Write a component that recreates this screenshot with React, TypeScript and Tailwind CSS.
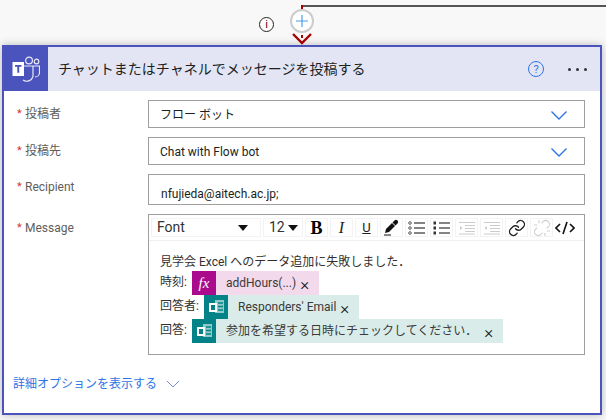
import React from 'react';
import { Link, Unlink } from 'lucide-react';

const FormsIcon = () => (
  <svg width="18" height="18" viewBox="0 0 18 18">
    <rect x="8" y="2" width="9" height="13" fill="#8fc9c9" />
    <path d="M11 5h5M11 8.500h5M11 12h5" stroke="#038387" strokeWidth="1.600" />
    <rect x="2" y="5" width="8" height="9" rx="0.500" fill="#fff" />
    <rect x="4" y="7" width="4" height="5" fill="#038387" />
  </svg>
);

const TeamsIcon = () => (
  <svg width="28" height="28" viewBox="0 0 28 28" fill="none">
    <circle cx="17" cy="5.500" r="3.400" stroke="#e8e9f7" strokeWidth="1.200" />
    <circle cx="24.500" cy="6.500" r="2.300" stroke="#e8e9f7" strokeWidth="1.200" />
    <path d="M12 11h15.500v6.500a4.500 4.500 0 0 1-4.500 4.500" stroke="#e8e9f7" strokeWidth="1.200" />
    <path d="M21 11v10.500a6.500 6.500 0 0 1-10 3.500" stroke="#e8e9f7" strokeWidth="1.200" />
    <rect x="0.500" y="7" width="11.500" height="14" fill="#fff" />
    <path d="M3 10h6.500v1.800H7.200v6H5.300v-6H3z" fill="#4b53bc" />
  </svg>
);

const WideChevron = () => (
  <svg width="16" height="9" viewBox="0 0 16 9" fill="none">
    <path d="M0.500 0.500l7.500 7.500 7.500-7.500" stroke="#2f74e4" strokeWidth="1.400" />
  </svg>
);

const ListIcon = ({ numbered }: { numbered?: boolean }) => (
  <svg width="18" height="14" viewBox="0 0 18 14" fill="none">
    {[2, 7, 12].map((y) => (
      <g key={y}>
        {numbered ? (
          <rect x="0.500" y={y - 1.500} width="2.500" height="3" fill="#333" />
        ) : (
          <circle cx="2" cy={y} r="1.300" stroke="#333" strokeWidth="0.800" />
        )}
        <path d={`M6 ${y}h11`} stroke="#333" strokeWidth="1.200" />
      </g>
    ))}
  </svg>
);

const IndentIcon = ({ flip }: { flip?: boolean }) => (
  <svg width="18" height="14" viewBox="0 0 18 14" fill="none" stroke="#ccc">
    <path d="M1 1.500h16M7 4.500h10M7 7.500h10M7 10.500h10M1 13h16" />
    <path d={flip ? 'M4 5v4L1.500 7z' : 'M2 5v4l2.500-2z'} fill="#ccc" stroke="none" />
  </svg>
);

const ToolButton = ({ children }: { children: React.ReactNode }) => (
  <div className="flex h-[19px] w-[23px] items-center justify-center border border-[#f3f3f3]">{children}</div>
);

const Token = ({
  icon,
  label,
  tone,
  closeGap = 'ml-[4px] mr-[10px]',
}: {
  icon: React.ReactNode;
  label: string;
  tone: 'fx' | 'forms';
  closeGap?: string;
}) => (
  <div className={`flex h-[24px] items-center ${tone === 'fx' ? 'bg-[#f3d9ec]' : 'bg-[#d9ecea]'}`}>
    <div className={`flex h-[24px] w-[24px] items-center justify-center ${tone === 'fx' ? 'bg-[#aa0a8c]' : 'bg-[#038387]'}`}>
      {icon}
    </div>
    <span className="ml-[10px] text-[#3b3a39]">{label}</span>
    <span className={`${closeGap} mt-[2px] text-[17px] font-light leading-none text-[#111]`}>×</span>
  </div>
);

const Field = ({
  label,
  offset,
  children,
}: {
  label: string;
  offset: string;
  children: React.ReactNode;
}) => (
  <div className="flex items-start">
    <div className={`flex w-[144px] pl-[13px] leading-[18px] text-[#605e5c] ${offset}`}>
      <span className="w-[8px] text-[11px] text-[#d13438]">*</span>
      {label}
    </div>
    {children}
  </div>
);

const Select = ({ value }: { value: string }) => (
  <div className="flex h-[28px] w-[437px] items-center justify-between border border-[#a19f9d] bg-white pl-[11px] pr-[17px] pt-[2px] text-[#201f1e]">
    <span>{value}</span>
    <WideChevron />
  </div>
);

const App: React.FC = () => {
  return (
    <div className="relative h-[420px] w-[606px] overflow-hidden bg-[#f8f8f8] font-['Roboto','Noto_Sans_CJK_JP',sans-serif] text-[12px]">
      <div className="relative h-[45px]">
        <div className="absolute left-[302px] top-[5px] h-[2px] w-[304px] bg-[#555]" />
        <div className="absolute left-[301px] top-[5px] h-[5px] w-[2px] bg-[#a80000]" />
        <div className="absolute left-[259px] top-[17px] flex h-[15px] w-[15px] items-center justify-center rounded-full border-[1.5px] border-[#222] bg-white text-[11px] leading-none text-[#600]">
          i
        </div>
        <div className="absolute left-[290px] top-[9px] flex h-[24px] w-[24px] items-center justify-center rounded-full border-2 border-[#ccc] bg-white">
          <svg width="12" height="12" viewBox="0 0 12 12">
            <path d="M6 0v12M0 6h12" stroke="#4a9eea" strokeWidth="1.200" />
          </svg>
        </div>
        <svg className="absolute left-[292px] top-[33px]" width="20" height="12" viewBox="0 0 20 12" fill="none">
          <path d="M1 1l9 9 9-9" stroke="#a80000" strokeWidth="2.400" />
          <path d="M10 2v3" stroke="#a80000" strokeWidth="2" />
        </svg>
      </div>

      <div className="ml-[2px] h-[370px] w-[600px] border-2 border-[#4b53bc] bg-white shadow-[0_0_8px_rgba(0,0,0,0.25)]">
        <div className="flex h-[44px] items-center bg-[#e3e5f4]">
          <div className="flex h-[44px] w-[44px] items-center justify-center bg-[#4b53bc]">
            <TeamsIcon />
          </div>
          <span className="ml-[10px] flex-1 text-[14px] text-[#201f1e]">チャットまたはチャネルでメッセージを投稿する</span>
          <div className="mr-[24px] flex h-[16px] w-[16px] items-center justify-center rounded-full border-[1.5px] border-[#2f74e4] text-[11px] leading-none text-[#2f74e4]">
            ?
          </div>
          <div className="mr-[13px] flex gap-[5px]">
            <div className="h-[3px] w-[3px] rounded-full bg-[#333]" />
            <div className="h-[3px] w-[3px] rounded-full bg-[#333]" />
            <div className="h-[3px] w-[3px] rounded-full bg-[#333]" />
          </div>
        </div>

        <div className="flex flex-col gap-[9px] pt-[9px]">
          <Field label="投稿者" offset="pt-[5px]">
            <Select value="フロー ボット" />
          </Field>
          <Field label="投稿先" offset="pt-[5px]">
            <Select value="Chat with Flow bot" />
          </Field>
          <Field label="Recipient" offset="pt-[4px]">
            <div className="flex h-[31px] w-[437px] items-end border border-[#a19f9d] bg-white pb-[1px] pl-[12px] text-[#201f1e]">
              nfujieda@aitech.ac.jp;
            </div>
          </Field>
          <Field label="Message" offset="pt-[5px]">
            <div className="h-[141px] w-[437px] border border-[#a19f9d] bg-white">
              <div className="flex h-[26px] items-center gap-[2px] border-b border-[#f0f0f0] pl-[2px]">
                <div className="flex h-[19px] w-[110px] items-center justify-between border border-[#f3f3f3] pl-[5px] pr-[12px] text-[14px] text-[#333]">
                  Font
                  <span className="h-0 w-0 border-x-[5px] border-t-[6px] border-x-transparent border-t-[#111]" />
                </div>
                <div className="flex h-[19px] w-[40px] items-center justify-between border border-[#f3f3f3] pl-[5px] pr-[4px] text-[14px] text-[#333]">
                  12
                  <span className="h-0 w-0 border-x-[5px] border-t-[6px] border-x-transparent border-t-[#111]" />
                </div>
                <ToolButton>
                  <span className="font-['Liberation_Serif',serif] text-[18px] font-bold leading-none text-black">B</span>
                </ToolButton>
                <ToolButton>
                  <span className="font-['Liberation_Serif',serif] text-[16px] italic leading-none text-[#222]">I</span>
                </ToolButton>
                <ToolButton>
                  <span className="text-[13px] leading-none text-[#222] underline">U</span>
                </ToolButton>
                <ToolButton>
                  <svg width="17" height="17" viewBox="0 0 17 17">
                    <path d="M2 14l1-4 6-6 3 3-6 6z" fill="#111" />
                    <path d="M9.500 3.500l2-2a1.500 1.500 0 0 1 3 3l-2 2z" fill="#111" />
                    <path d="M1 16h7" stroke="#111" />
                  </svg>
                </ToolButton>
                <ToolButton>
                  <ListIcon />
                </ToolButton>
                <ToolButton>
                  <ListIcon numbered />
                </ToolButton>
                <ToolButton>
                  <IndentIcon />
                </ToolButton>
                <ToolButton>
                  <IndentIcon flip />
                </ToolButton>
                <ToolButton>
                  <Link size={18} strokeWidth={1.800} className="text-[#222]" />
                </ToolButton>
                <ToolButton>
                  <Unlink size={18} strokeWidth={1.400} className="text-[#ccc]" />
                </ToolButton>
                <svg width="20" height="14" viewBox="0 0 20 14" fill="none" stroke="#111" strokeWidth="1.600">
                  <path d="M5 3L1 7l4 4M15 3l4 4-4 4M12 1L8 13" />
                </svg>
              </div>
              <div className="pl-[11px] pt-[12px] text-[#323130]">
                <div className="h-[18px] leading-[18px]">見学会 Excel へのデータ追加に失敗しました．</div>
                <div className="flex h-[24px] items-center">
                  <span className="mb-[2px] w-[32px]">時刻:</span>
                  <Token tone="fx" label="addHours(...)" icon={<span className="font-['Liberation_Serif',serif] text-[15px] italic text-white">fx</span>} />
                </div>
                <div className="flex h-[24px] items-center">
                  <span className="mb-[2px] w-[44px]">回答者:</span>
                  <Token tone="forms" label="Responders' Email" icon={<FormsIcon />} />
                </div>
                <div className="flex h-[24px] items-center">
                  <span className="mb-[2px] w-[32px]">回答:</span>
                  <Token
                    tone="forms"
                    label="参加を希望する日時にチェックしてください．"
                    icon={<FormsIcon />}
                    closeGap="ml-[7px] mr-[10px]"
                  />
                </div>
              </div>
            </div>
          </Field>
        </div>

        <div className="flex items-center pl-[9px] pt-[20px] text-[#2f74e4]">
          詳細オプションを表示する
          <svg width="14" height="8" viewBox="0 0 14 8" fill="none" className="ml-[9px]">
            <path d="M1 1l6 6 6-6" stroke="#7a8fe0" strokeWidth="1" />
          </svg>
        </div>
      </div>
    </div>
  );
};

export default App;
